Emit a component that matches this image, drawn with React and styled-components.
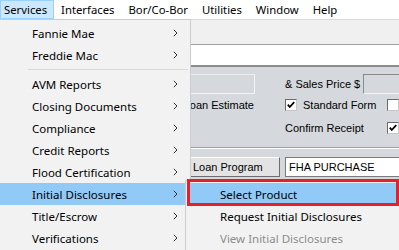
import React from 'react';
import styled, { createGlobalStyle } from 'styled-components';

const Global = createGlobalStyle`
  html, body { margin: 0; padding: 0; width: 399px; height: 250px; overflow: hidden; background: #fff; }
  #root { width: 399px; height: 250px; }
`;

const Screen = styled.div`
  position: relative;
  width: 399px;
  height: 250px;
  overflow: hidden;
  display: flex;
  flex-direction: column;
  font-family: "Noto Sans", "Open Sans", sans-serif;
`;

const MenuBar = styled.div`
  height: 19px;
  flex-shrink: 0;
  display: flex;
  align-items: stretch;
  background: #fff;
`;

const MenuBarItem = styled.div`
  display: flex;
  align-items: center;
  padding: 0 6px 0 ${p => (p.$first ? 3 : 6)}px;
  font-size: 11.3px;
  color: #000;
  white-space: nowrap;
  background: ${p => (p.$open ? '#cce8ff' : 'transparent')};
  border: 1px solid ${p => (p.$open ? '#99d1ff' : 'transparent')};
`;

const Toolbar = styled.div`
  height: 24px;
  flex-shrink: 0;
  background: #f0f0f0;
  border-top: 1px solid #dadada;
  border-bottom: 1px solid #a0a0a0;
`;

const WhiteStrip = styled.div`
  height: 20px;
  flex-shrink: 0;
  background: #fff;
  border-bottom: 2px solid #8c8c8c;
`;

const Panel = styled.div`
  flex: 1;
  background: #d5d8dc;
  padding-top: 7px;
  font-family: "Liberation Sans", Arial, sans-serif;
  font-size: 11px;
  color: #000;
`;

const Row = styled.div`
  display: grid;
  grid-template-columns: 165px 102px 1fr;
  align-items: center;
  height: ${p => p.$h}px;
  margin-top: ${p => p.$mt || 0}px;
  padding-left: 120px;
`;

const Cell = styled.div`
  display: flex;
  align-items: center;
  gap: ${p => p.$gap || 0}px;
  justify-content: ${p => (p.$end ? 'flex-end' : 'flex-start')};
  padding-right: ${p => p.$pr || 0}px;
  grid-column: ${p => p.$span || 'auto'};
  white-space: nowrap;
  min-width: 0;
`;

const GrayBox = styled.div`
  width: ${p => p.$w}px;
  height: 20px;
  box-sizing: border-box;
  background: #d5d8dc;
  border: 1px solid ${p => (p.$sunken ? '#8a8a8a' : '#eceef0')};
  border-right-color: #f4f4f4;
  border-bottom-color: #f4f4f4;
  flex-shrink: 0;
`;

const TextBox = styled.div`
  flex: 1;
  height: 20px;
  box-sizing: border-box;
  background: #fff;
  border: 1px solid #7a7a7a;
  border-right: none;
  padding-left: 3px;
  display: flex;
  align-items: center;
  font-size: 11px;
`;

const Button = styled.div`
  width: 93px;
  height: 20px;
  box-sizing: border-box;
  background: #e3e3e3;
  border: 1px solid #fff;
  border-right-color: #6d6d6d;
  border-bottom-color: #6d6d6d;
  display: flex;
  align-items: center;
  padding-left: 5px;
`;

const CheckBox = styled.div`
  width: 12px;
  height: 12px;
  box-sizing: border-box;
  background: #fff;
  border: 1px solid #6a6a6a;
  border-right-color: #c8c8c8;
  border-bottom-color: #c8c8c8;
  display: flex;
  align-items: center;
  justify-content: center;
  flex-shrink: 0;
`;

const Divider = styled.div`
  margin-top: 10px;
  height: 1px;
  background: #a0a0a0;
  border-bottom: 1px solid #fff;
`;

const Dropdown = styled.div`
  position: absolute;
  left: -3px;
  top: 19px;
  width: 192px;
  height: 260px;
  background: #f2f2f2;
  border: 1px solid #cccccc;
  padding-top: 2px;
  font-family: "Noto Sans", "Open Sans", sans-serif;
  font-size: 11.5px;
`;

const SubMenu = styled.div`
  position: absolute;
  left: 185px;
  top: 180px;
  width: 240px;
  height: 90px;
  background: #f2f2f2;
  border: 1px solid #cccccc;
  padding-top: 2px;
  font-family: "Noto Sans", "Open Sans", sans-serif;
  font-size: 11.5px;
`;

const MenuItem = styled.div`
  height: 22px;
  display: flex;
  align-items: center;
  justify-content: space-between;
  margin: 0 ${p => p.$mr ?? 4}px 0 2px;
  padding: 0 8px 0 ${p => p.$pl}px;
  background: ${p => (p.$active ? '#91c9f7' : 'transparent')};
  color: ${p => (p.$disabled ? '#8d8d8d' : '#000')};
  white-space: nowrap;
`;

const Separator = styled.div`
  height: 1px;
  margin: 3px 2px 3px 30px;
  background: #d7d7d7;
`;

const Annotation = styled.div`
  position: absolute;
  left: 187px;
  top: 179px;
  width: 212px;
  height: 27px;
  box-sizing: border-box;
  border: 3px solid #e5202a;
  pointer-events: none;
`;

const Chevron = () => (
  <svg width="5" height="8" viewBox="0 0 5 8">
    <polyline points="0.8,0.8 4,4 0.8,7.2" fill="none" stroke="#333" strokeWidth="1" />
  </svg>
);

const Check = () => (
  <svg width="8" height="8" viewBox="0 0 8 8">
    <polyline points="0.8,3.6 2.8,6 7.2,1.2" fill="none" stroke="#000" strokeWidth="1.8" />
  </svg>
);

const topMenus = ['Services', 'Interfaces', 'Bor/Co-Bor', 'Utilities', 'Window', 'Help'];

const services = [
  { label: 'Fannie Mae' },
  { label: 'Freddie Mac' },
  { sep: true },
  { label: 'AVM Reports' },
  { label: 'Closing Documents' },
  { label: 'Compliance' },
  { label: 'Credit Reports' },
  { label: 'Flood Certification' },
  { label: 'Initial Disclosures', active: true },
  { label: 'Title/Escrow' },
  { label: 'Verifications' },
];

const subItems = [
  { label: 'Select Product', active: true },
  { label: 'Request Initial Disclosures' },
  { label: 'View Initial Disclosures', disabled: true },
];

export default function App() {
  return (
    <>
      <Global />
      <Screen>
        <MenuBar>
          {topMenus.map((m, i) => (
            <MenuBarItem key={m} $first={i === 0} $open={i === 0}>{m}</MenuBarItem>
          ))}
        </MenuBar>
        <Toolbar />
        <WhiteStrip />
        <Panel>
          <Row $h={20}>
            <Cell><GrayBox $w={135} /></Cell>
            <Cell $span="2 / 4" $gap={3}>& Sales Price $<GrayBox $w={80} $sunken /></Cell>
          </Row>
          <Row $h={18} $mt={2}>
            <Cell $end $pr={31}>Loan Estimate</Cell>
            <Cell $gap={6}><CheckBox><Check /></CheckBox>Standard Form</Cell>
            <Cell><CheckBox /></Cell>
          </Row>
          <Row $h={18} $mt={5}>
            <Cell />
            <Cell>Confirm Receipt</Cell>
            <Cell><CheckBox><Check /></CheckBox></Cell>
          </Row>
          <Divider />
          <Row $h={20} $mt={8}>
            <Cell $end $pr={5}><Button>Loan Program</Button></Cell>
            <Cell $span="2 / 4"><TextBox>FHA PURCHASE</TextBox></Cell>
          </Row>
        </Panel>

        <Dropdown>
          {services.map((s, i) =>
            s.sep ? (
              <Separator key={i} />
            ) : (
              <MenuItem key={s.label} $pl={32} $active={s.active}>
                {s.label}
                <Chevron />
              </MenuItem>
            )
          )}
        </Dropdown>

        <SubMenu>
          {subItems.map(s => (
            <MenuItem key={s.label} $pl={32} $mr={0} $active={s.active} $disabled={s.disabled}>
              {s.label}
            </MenuItem>
          ))}
        </SubMenu>
        <Annotation />
      </Screen>
    </>
  );
}
